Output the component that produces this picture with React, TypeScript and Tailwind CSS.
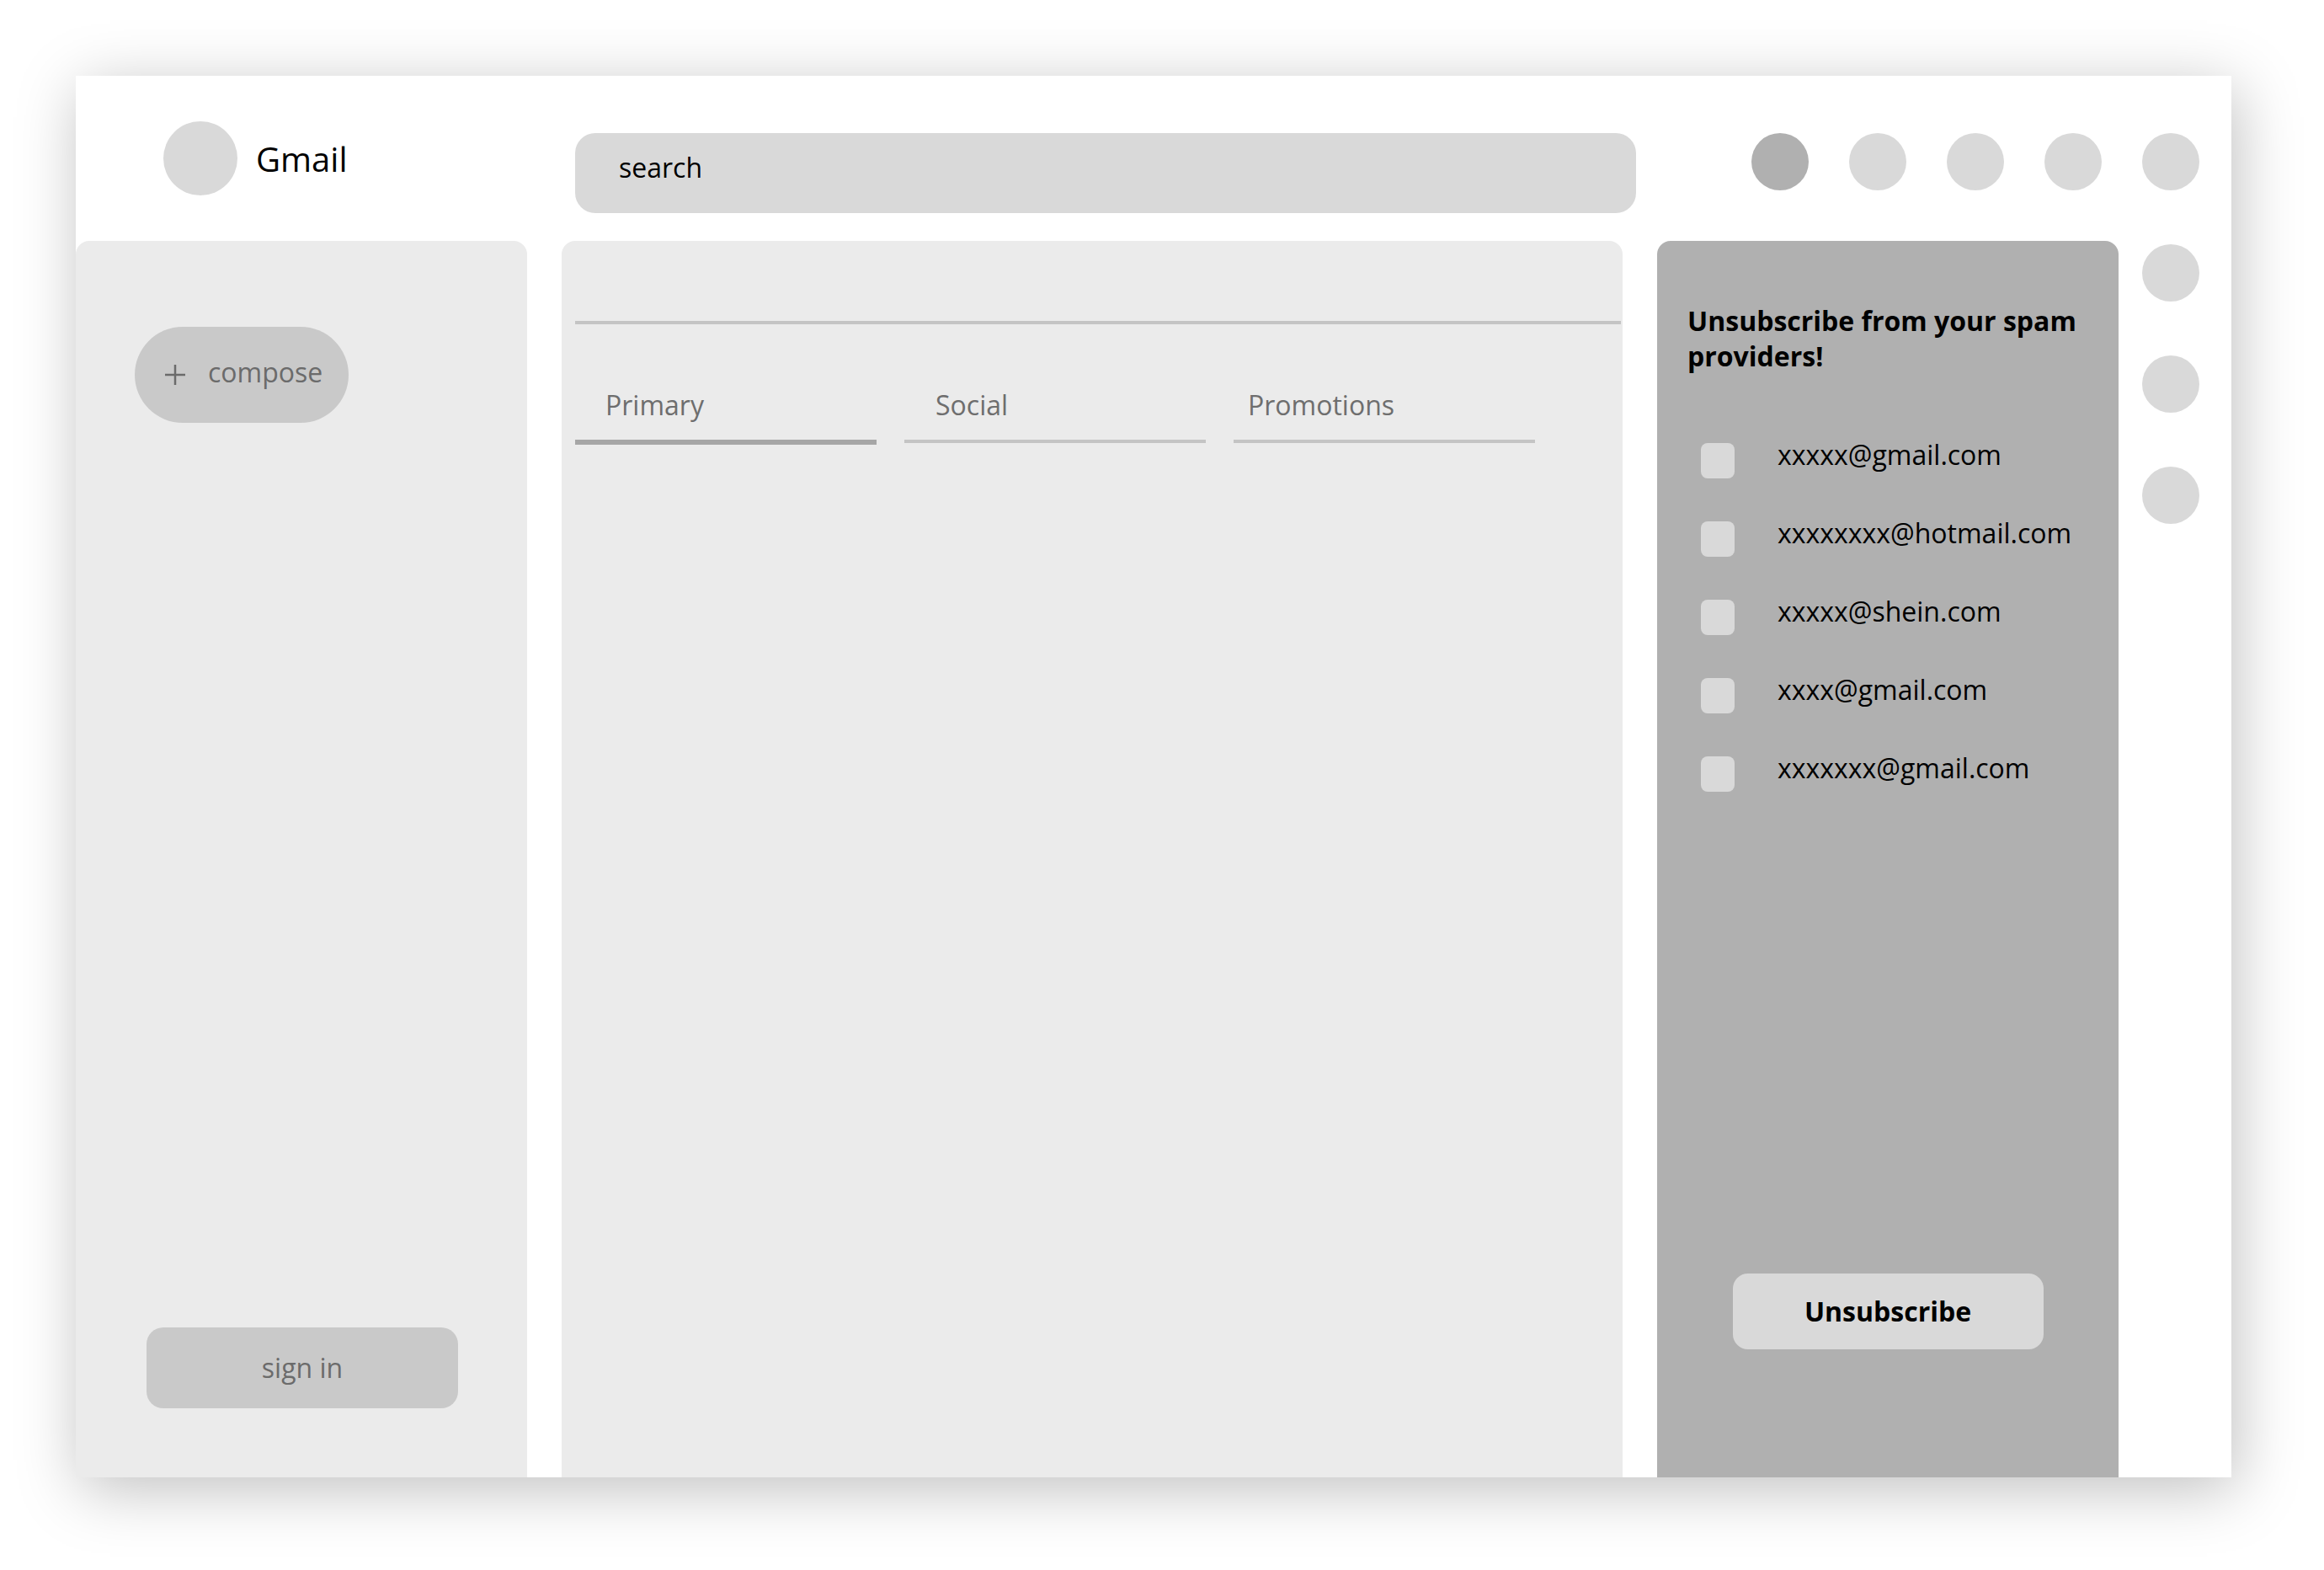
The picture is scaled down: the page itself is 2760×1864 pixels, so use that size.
import { useState } from "react";

// Gmail unsubscribe wireframe

const emails = [
  "xxxxx@gmail.com",
  "xxxxxxxx@hotmail.com",
  "xxxxx@shein.com",
  "xxxx@gmail.com",
  "xxxxxxx@gmail.com",
];

const tabs = [
  { label: "Primary", pad: "pl-[36px]", active: true },
  { label: "Social", pad: "pl-[37px]", active: false },
  { label: "Promotions", pad: "pl-[17px]", active: false },
];

export default function App() {
  const [checked, setChecked] = useState<boolean[]>(emails.map(() => false));

  return (
    <div className="w-[2760px] h-[1864px] bg-white pt-[90px] pl-[90px] font-['Open_Sans',sans-serif]">
      <div className="w-[2560px] h-[1664px] bg-white flex flex-col shadow-[6px_14px_70px_rgba(0,0,0,0.25)]">
        {/* Header */}
        <div className="h-[196px] flex items-start shrink-0">
          <div className="w-[593px] shrink-0 flex items-center pl-[104px] pt-[54px]">
            <div className="w-[88px] h-[88px] rounded-full bg-[#d9d9d9]" />
            <span className="ml-[22px] text-[40px] leading-none text-black pt-[2px]">Gmail</span>
          </div>
          <div className="mt-[68px] w-[1260px] h-[95px] rounded-[24px] bg-[#d9d9d9] flex items-center pl-[52px]">
            <span className="text-[32px] leading-none text-black pb-[14px]">search</span>
          </div>
          <div className="mt-[68px] ml-[137px] flex gap-[48px]">
            <div className="w-[68px] h-[68px] rounded-full bg-[#b0b0b0]" />
            <div className="w-[68px] h-[68px] rounded-full bg-[#d9d9d9]" />
            <div className="w-[68px] h-[68px] rounded-full bg-[#d9d9d9]" />
            <div className="w-[68px] h-[68px] rounded-full bg-[#d9d9d9]" />
            <div className="w-[68px] h-[68px] rounded-full bg-[#d9d9d9]" />
          </div>
        </div>

        {/* Body */}
        <div className="flex-1 flex">
          {/* Left sidebar */}
          <div className="w-[536px] shrink-0 bg-[#ebebeb] rounded-t-[16px] flex flex-col justify-between pt-[102px] pb-[82px]">
            <button className="ml-[70px] w-[254px] h-[114px] rounded-full bg-[#c9c9c9] flex items-center pl-[36px]">
              <svg width="24" height="24" viewBox="0 0 24 24" className="shrink-0">
                <path d="M12 0v24M0 12h24" stroke="#6b6b6b" strokeWidth="2.5" fill="none" />
              </svg>
              <span className="ml-[27px] text-[32px] leading-none text-[#6b6b6b] pb-[7px]">compose</span>
            </button>
            <button className="ml-[84px] w-[370px] h-[96px] rounded-[20px] bg-[#c9c9c9] flex items-center justify-center">
              <span className="text-[32px] leading-none text-[#6b6b6b] pb-[1px]">sign in</span>
            </button>
          </div>

          {/* Inbox */}
          <div className="ml-[41px] w-[1260px] shrink-0 bg-[#ebebeb] rounded-t-[16px] pl-[16px] pr-[2px] pt-[95px]">
            <div className="h-[4px] bg-[#c4c4c4]" />
            <div className="flex gap-[33px] mt-[80px]">
              {tabs.map((t) => (
                <div key={t.label} className="w-[358px]">
                  <div className={`${t.pad} text-[32px] leading-none text-[#6e6e6e]`}>{t.label}</div>
                  <div className={`mt-[25px] ${t.active ? "h-[6px] bg-[#a6a6a6]" : "h-[4px] bg-[#c4c4c4]"}`} />
                </div>
              ))}
            </div>
          </div>

          {/* Unsubscribe panel */}
          <div className="ml-[41px] w-[548px] shrink-0 bg-[#b0b0b0] rounded-t-[16px] flex flex-col pt-[74px] pb-[152px]">
            <h2 className="pl-[36px] pr-[20px] text-[32px] leading-[42px] font-bold text-black">
              Unsubscribe from your spam providers!
            </h2>
            <div className="mt-[82px] flex flex-col gap-[51px] pl-[52px]">
              {emails.map((e, i) => (
                <label key={e} className="flex items-center h-[42px] cursor-pointer">
                  <span
                    onClick={() => setChecked(checked.map((c, j) => (j === i ? !c : c)))}
                    className="w-[40px] h-[42px] rounded-[8px] bg-[#d9d9d9] shrink-0"
                  />
                  <span className="ml-[51px] text-[32px] leading-none text-black pb-[15px]">{e}</span>
                </label>
              ))}
            </div>
            <div className="flex-1" />
            <button className="mx-auto w-[369px] h-[90px] rounded-[18px] bg-[#d9d9d9] text-[32px] font-bold text-black leading-none">
              Unsubscribe
            </button>
          </div>

          {/* Side icons */}
          <div className="ml-[28px] mt-[4px] flex flex-col gap-[64px]">
            <div className="w-[68px] h-[68px] rounded-full bg-[#d9d9d9]" />
            <div className="w-[68px] h-[68px] rounded-full bg-[#d9d9d9]" />
            <div className="w-[68px] h-[68px] rounded-full bg-[#d9d9d9]" />
          </div>
        </div>
      </div>
    </div>
  );
}
